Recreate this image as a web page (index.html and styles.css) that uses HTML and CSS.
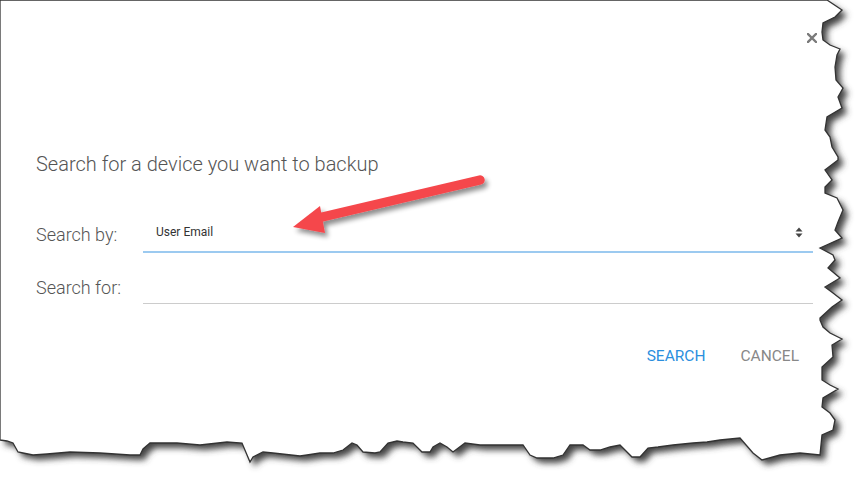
FILE: index.html
```html
<!DOCTYPE html>
<html>
<head>
<meta charset="utf-8">
<link rel="stylesheet" href="styles.css">
</head>
<body>
<div class="paper">
  <div class="dialog">
    <div class="header">
      <button class="close" aria-label="Close">
        <svg width="10" height="10" viewBox="0 0 10 10"><path d="M1 1L9 9M9 1L1 9" stroke="#7a7a7a" stroke-width="2.4" stroke-linecap="square"/></svg>
      </button>
    </div>
    <h2 class="title">Search for a device you want to backup</h2>
    <div class="form">
      <div class="row row-select">
        <label class="label">Search by:</label>
        <div class="field select">
          <span class="value">User Email</span>
          <svg class="caret" width="8" height="11" viewBox="0 0 8 11"><path d="M4 0.5L7.5 4.5H0.5Z M4 10.5L7.5 6.5H0.5Z" fill="#444"/></svg>
        </div>
      </div>
      <div class="row row-input">
        <label class="label">Search for:</label>
        <div class="field input"></div>
      </div>
    </div>
    <div class="actions">
      <button class="btn primary">SEARCH</button>
      <button class="btn">CANCEL</button>
    </div>
  </div>

  <svg class="torn" width="866" height="485" viewBox="0 0 866 485">
    <defs>
      <path id="edge" d="M0 0 L827 0 L842 10 L835 17 L823 23 L822 32 L823 40 L830 45 L840 49 L837 55 L835 67 L836 80 L843 88 L838 97 L842 108 L827 117 L825 130 L830 137 L832 147 L838 157 L838 160 L825 170 L832 180 L825 187 L825 193 L837 198 L843 210 L838 222 L835 230 L842 238 L820 248 L833 255 L835 260 L828 268 L840 278 L825 287 L833 293 L842 300 L832 307 L820 318 L820 320 L823 327 L830 333 L842 339 L832 345 L833 357 L822 367 L822 380 L830 385 L838 389 L823 398 L822 407 L830 413 L835 420 L833 430 L822 435 L820 455 L800 453 L780 455 L762 460 L753 453 L740 438 L720 440 L707 442 L693 443 L673 445 L658 447 L648 448 L640 457 L632 457 L620 445 L610 447 L600 450 L590 450 L583 445 L570 445 L563 455 L553 458 L537 458 L530 455 L523 445 L500 445 L480 445 L465 443 L453 452 L447 447 L440 443 L433 447 L430 452 L422 452 L413 443 L403 442 L397 441 L388 443 L380 452 L375 453 L363 452 L357 445 L352 443 L343 450 L333 453 L320 453 L307 455 L300 456 L273 453 L263 452 L253 457 L250 462 L242 443 L227 442 L200 445 L177 443 L157 443 L150 443 L143 449 L140 455 L130 455 L100 453 L70 452 L47 454 L33 455 L23 453 L18 452 L13 443 L7 441 L0 440 Z"/>
      <clipPath id="outside">
        <path clip-rule="evenodd" d="M-10 -10 H880 V500 H-10 Z M0 0 L827 0 L842 10 L835 17 L823 23 L822 32 L823 40 L830 45 L840 49 L837 55 L835 67 L836 80 L843 88 L838 97 L842 108 L827 117 L825 130 L830 137 L832 147 L838 157 L838 160 L825 170 L832 180 L825 187 L825 193 L837 198 L843 210 L838 222 L835 230 L842 238 L820 248 L833 255 L835 260 L828 268 L840 278 L825 287 L833 293 L842 300 L832 307 L820 318 L820 320 L823 327 L830 333 L842 339 L832 345 L833 357 L822 367 L822 380 L830 385 L838 389 L823 398 L822 407 L830 413 L835 420 L833 430 L822 435 L820 455 L800 453 L780 455 L762 460 L753 453 L740 438 L720 440 L707 442 L693 443 L673 445 L658 447 L648 448 L640 457 L632 457 L620 445 L610 447 L600 450 L590 450 L583 445 L570 445 L563 455 L553 458 L537 458 L530 455 L523 445 L500 445 L480 445 L465 443 L453 452 L447 447 L440 443 L433 447 L430 452 L422 452 L413 443 L403 442 L397 441 L388 443 L380 452 L375 453 L363 452 L357 445 L352 443 L343 450 L333 453 L320 453 L307 455 L300 456 L273 453 L263 452 L253 457 L250 462 L242 443 L227 442 L200 445 L177 443 L157 443 L150 443 L143 449 L140 455 L130 455 L100 453 L70 452 L47 454 L33 455 L23 453 L18 452 L13 443 L7 441 L0 440 Z"/>
      </clipPath>
      <filter id="blur" x="-5%" y="-5%" width="110%" height="110%">
        <feGaussianBlur stdDeviation="3"/>
      </filter>
    </defs>
    <g clip-path="url(#outside)">
      <rect x="0" y="0" width="866" height="485" fill="#fff"/>
      <use href="#edge" transform="translate(5 5)" fill="#444" filter="url(#blur)"/>
    </g>
    <use href="#edge" fill="none" stroke="#333" stroke-width="1.3"/>
  </svg>

  <svg class="arrow" width="866" height="485" viewBox="0 0 866 485">
    <defs>
      <filter id="ashadow" x="-20%" y="-50%" width="140%" height="200%">
        <feGaussianBlur in="SourceAlpha" stdDeviation="2.5"/>
        <feOffset dx="3" dy="4" result="b"/>
        <feComponentTransfer><feFuncA type="linear" slope="0.45"/></feComponentTransfer>
        <feMerge><feMergeNode/><feMergeNode in="SourceGraphic"/></feMerge>
      </filter>
    </defs>
    <g filter="url(#ashadow)">
      <line x1="480" y1="180" x2="318" y2="218" stroke="#f5474c" stroke-width="9.5" stroke-linecap="round"/>
      <path d="M293 227 L320 206 L325 233 Z" fill="#f5474c"/>
    </g>
  </svg>
</div>
</body>
</html>
```

FILE: styles.css
```css
* { box-sizing: border-box; }
html, body { margin: 0; padding: 0; background: #fff; }
body { width: 866px; height: 485px; overflow: hidden; font-family: Roboto, "Liberation Sans", sans-serif; }

.paper { position: relative; width: 866px; height: 485px; }

.dialog {
  display: flex;
  flex-direction: column;
  padding: 30px 49px 0 36px;
  width: 862px;
}

.header { display: flex; justify-content: flex-end; height: 16px; }
.close {
  border: 0; background: none; padding: 0; margin: 3px -4px 0 0;
  width: 10px; height: 10px; display: block; cursor: pointer;
}
.close svg { display: block; }

.title {
  margin: 106px 0 0 0;
  font-weight: 300;
  font-size: 20px;
  line-height: 24px;
  color: #555;
}

.form { display: flex; flex-direction: column; margin-top: 37px; }
.row { display: flex; align-items: flex-end; }
.row + .row { margin-top: 11px; }
.label {
  width: 107px;
  font-size: 18px;
  font-weight: 300;
  color: #555;
  line-height: 22px;
}
.row-select .label { padding-bottom: 7px; }
.row-input .label { padding-bottom: 5px; }
.field { flex: 1; height: 40px; display: flex; align-items: center; }
.select { border-bottom: 2px solid #9ccaf0; padding: 0 10px 0 13px; justify-content: space-between; }
.select .value { font-size: 12px; color: #333; }
.input { border-bottom: 1px solid #ccc; }
.caret { display: block; }

.actions { display: flex; justify-content: flex-end; gap: 35px; margin-top: 43px; padding-right: 14px; }
.btn {
  border: 0; background: none; padding: 0; font-family: inherit;
  font-size: 15.5px; color: #888; cursor: pointer;
}
.btn.primary { color: #2b8fde; }

.torn, .arrow { position: absolute; left: 0; top: 0; pointer-events: none; }
```
